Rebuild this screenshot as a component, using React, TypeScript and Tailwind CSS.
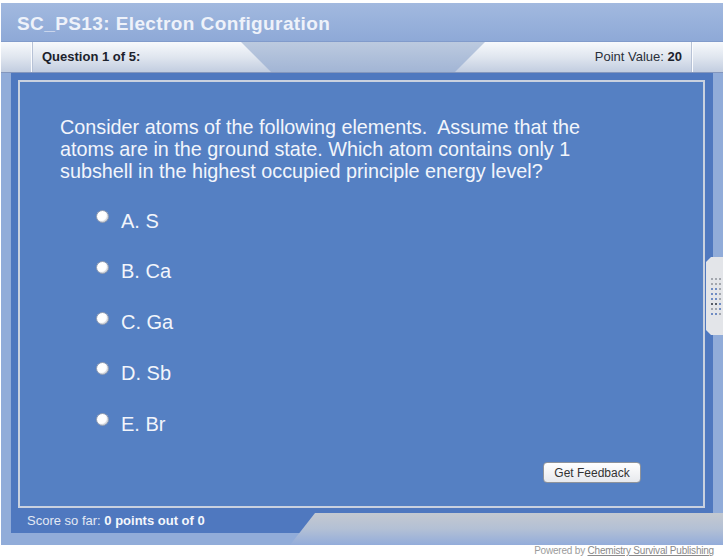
export default function App() {
  const options = ['A. S', 'B. Ca', 'C. Ga', 'D. Sb', 'E. Br'];

  // grip dots on the right-side handle: g = gray, b = blue, k = dark
  const grip = ['ggg', 'ggg', 'bbg', 'bbg', 'bbg', 'kkb', 'ggb', 'bbg'];

  return (
    <div className="relative w-[724px] h-[557px] overflow-hidden bg-white font-['Liberation_Sans',Arial,sans-serif]">
      <div className="ml-[1px] mt-[3px] w-[722px]">
        {/* Title bar */}
        <div className="flex h-[39px] items-center border-b border-[#819bcb] bg-gradient-to-b from-[#a2b9df] to-[#8ea9d7] pl-[16px] pt-[5px]">
          <h1 className="text-[19px] font-bold tracking-[0.4px] text-[#eef2fa]">
            SC_PS13: Electron Configuration
          </h1>
        </div>

        {/* Question header */}
        <div className="flex h-[31px] border-b border-[#8396bd] bg-gradient-to-b from-[#bccadf] to-[#a2b5d5]">
          <div className="flex h-full w-[270px] items-center bg-gradient-to-b from-[#f7f9fc] via-[#e0e6ef] to-[#c2cde0] [clip-path:polygon(0_0,240px_0,270px_100%,0_100%)]">
            <div className="h-full w-[31px] border-r border-[#fbfcfe] shadow-[1px_0_0_#b7c2d6]" />
            <span className="pl-[10px] text-[13px] font-bold text-[#1c222c]">Question 1 of 5:</span>
          </div>
          <div className="flex-1" />
          <div className="flex h-full w-[268px] items-center justify-end bg-gradient-to-b from-[#f7f9fc] via-[#e0e6ef] to-[#c2cde0] [clip-path:polygon(30px_0,100%_0,100%_100%,0_100%)]">
            <span className="pr-[10px] text-[13px] text-[#2a303a]">
              Point Value: <b className="text-[#1c222c]">20</b>
            </span>
            <div className="h-full w-[31px] border-l border-[#fbfcfe] shadow-[-1px_0_0_#b7c2d6]" />
          </div>
        </div>

        {/* Main area */}
        <div className="relative bg-[#91acd9] px-[10px] pb-[12px]">
          <div className="bg-[#4f78bf] pl-[7px] pr-[8px] pt-[7px]">
            <div className="h-[428px] border-2 border-[#c9d1df] bg-[#5580c3] pl-[40px] pt-[34px] text-[#f2f5fb]">
              <p className="text-[19.8px] leading-[22px]">
                {'Consider atoms of the following elements.\u00a0 Assume that the'}
                <br />
                atoms are in the ground state. Which atom contains only 1
                <br />
                subshell in the highest occupied principle energy level?
              </p>

              <div className="ml-[36px] mt-[27.5px] flex flex-col gap-[28.75px]">
                {options.map((o) => (
                  <label key={o} className="flex h-[22px] items-start gap-[12px]">
                    <span className="mt-[0.5px] h-[13px] w-[13px] rounded-full border border-[#8c98ae] bg-white shadow-[inset_-1px_-1px_1px_#cfd3da]" />
                    <span className="text-[20px] leading-[22px]">{o}</span>
                  </label>
                ))}
              </div>

              <button className="ml-[483px] mt-[27.5px] flex h-[21px] w-[98px] items-center justify-center rounded-[4px] border border-[#8e939b] bg-gradient-to-b from-white to-[#e7e9ed] text-[12px] text-[#333]">
                Get Feedback
              </button>
            </div>

            <div className="-ml-[7px] flex h-[25px] items-center pl-[16px] pt-[1px] text-[13px] text-[#e3e9f4]">
              Score so far:&nbsp;<b className="text-[#f4f7fc]">0 points out of 0</b>
            </div>
          </div>

          {/* bottom right tab */}
          <div className="absolute left-[289px] top-[440px] h-[32px] w-[433px] bg-gradient-to-b from-[#c4c9d0] via-[#b3c0d5] to-[#93acda] [clip-path:polygon(25px_0,100%_0,100%_100%,0_100%)]" />

          {/* side handle */}
          <div className="absolute left-[705px] top-[184px] flex h-[78px] w-[17px] flex-col items-center justify-center gap-[3px] bg-[#e3e5e9] pl-[2px] [clip-path:polygon(5px_0,100%_0,100%_100%,5px_100%,0_calc(100%-5px),0_5px)]">
            {grip.map((row, i) => (
              <div key={i} className="flex gap-[2px]">
                {row.split('').map((c, j) => (
                  <span
                    key={j}
                    className={
                      c === 'b'
                        ? 'h-[2px] w-[2px] bg-[#6f8cc4]'
                        : c === 'k'
                          ? 'h-[2px] w-[2px] bg-[#555b66]'
                          : 'h-[2px] w-[2px] bg-[#a3a7ae]'
                    }
                  />
                ))}
              </div>
            ))}
          </div>
        </div>
      </div>

      <div className="flex h-[12px] justify-end pr-[10px] text-[10px] leading-[12px] tracking-[-0.2px] text-[#9b9b9b]">
        Powered by&nbsp;<span className="text-[#8a8a8a] underline">Chemistry Survival Publishing</span>
      </div>
    </div>
  );
}
